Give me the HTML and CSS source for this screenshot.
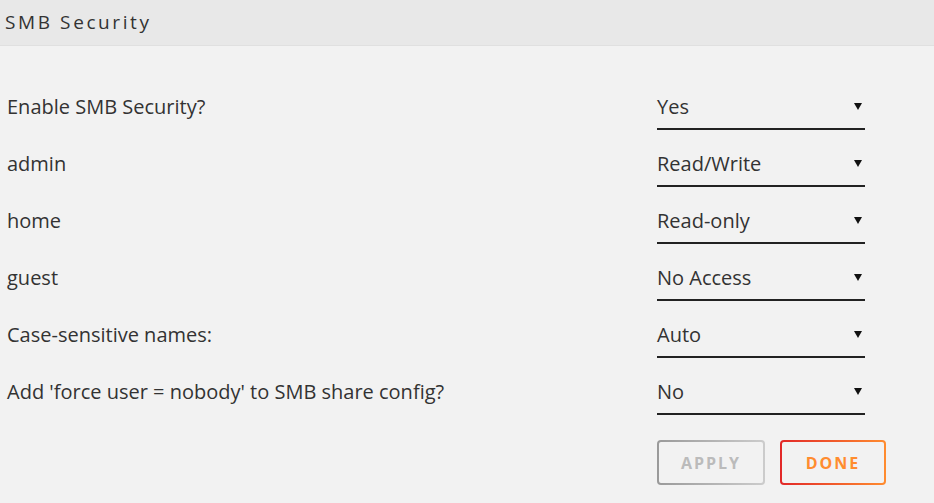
FILE: index.html
```html
<!DOCTYPE html>
<html>

<head>
	<title>SMB Security</title>
	<link rel="stylesheet" href="styles.css">
</head>

<body>
	<div class="title">
		<span>SMB Security</span>
	</div>

	<form class="settings">
		<div class="row">
			<label>Enable SMB Security?</label>
			<div class="select"><span>Yes</span><i class="caret"></i></div>
		</div>
		<div class="row">
			<label>admin</label>
			<div class="select"><span>Read/Write</span><i class="caret"></i></div>
		</div>
		<div class="row">
			<label>home</label>
			<div class="select"><span>Read-only</span><i class="caret"></i></div>
		</div>
		<div class="row">
			<label>guest</label>
			<div class="select"><span>No Access</span><i class="caret"></i></div>
		</div>
		<div class="row">
			<label>Case-sensitive names:</label>
			<div class="select"><span>Auto</span><i class="caret"></i></div>
		</div>
		<div class="row">
			<label>Add 'force user = nobody' to SMB share config?</label>
			<div class="select"><span>No</span><i class="caret"></i></div>
		</div>

		<div class="actions">
			<button type="button" class="btn btn-apply" disabled>Apply</button>
			<button type="button" class="btn btn-done">Done</button>
		</div>
	</form>
</body>

</html>
```

FILE: styles.css
```css
body {
	margin: 0;
	background-color: #f2f2f2;
	font-family: "Open Sans", Arial, sans-serif;
	color: #333;
}

/* Thanh tiêu đề */
.title {
	height: 45px;
	border-bottom: 1px solid #e0e0e0;
	background-color: #e8e8e8;
	padding-left: 5px;
	display: flex;
	align-items: center;
}

.title span {
	font-size: 19px;
	letter-spacing: 2.6px;
	color: #333;
	margin-top: -2px;
}

.settings {
	padding: 37px 69px 0 7px;
}

.row {
	display: grid;
	grid-template-columns: 1fr 208px;
	height: 57px;
}

.row label {
	font-size: 20px;
	line-height: 24px;
	padding-top: 12px;
}

.select {
	position: relative;
	border-bottom: 2px solid #222;
	height: 47px;
	box-sizing: border-box;
	padding-top: 12px;
	font-size: 20px;
	line-height: 24px;
	color: #333;
}

.caret {
	position: absolute;
	right: 3px;
	top: 20px;
	width: 0;
	height: 0;
	border-left: 4px solid transparent;
	border-right: 4px solid transparent;
	border-top: 7px solid #111;
}

/* Nút bấm */
.actions {
	display: flex;
	gap: 15px;
	margin-left: calc(100% - 208px);
	margin-top: 15px;
}

.btn {
	flex-shrink: 0;
	width: 108px;
	height: 45px;
	border: 2px solid transparent;
	border-radius: 4px;
	font-family: "Open Sans", Arial, sans-serif;
	font-size: 16px;
	font-weight: bold;
	letter-spacing: 2px;
	text-transform: uppercase;
	background-origin: border-box;
	background-clip: padding-box, border-box;
}

.btn-apply {
	color: #bbb;
	background-image: linear-gradient(#f2f2f2, #f2f2f2), linear-gradient(90deg, #9a9a9a, #cccccc);
}

.btn-done {
	width: 106px;
	color: #ff8c2f;
	cursor: pointer;
	background-image: linear-gradient(#f2f2f2, #f2f2f2), linear-gradient(90deg, #e22828, #ff8c2f);
}
```
